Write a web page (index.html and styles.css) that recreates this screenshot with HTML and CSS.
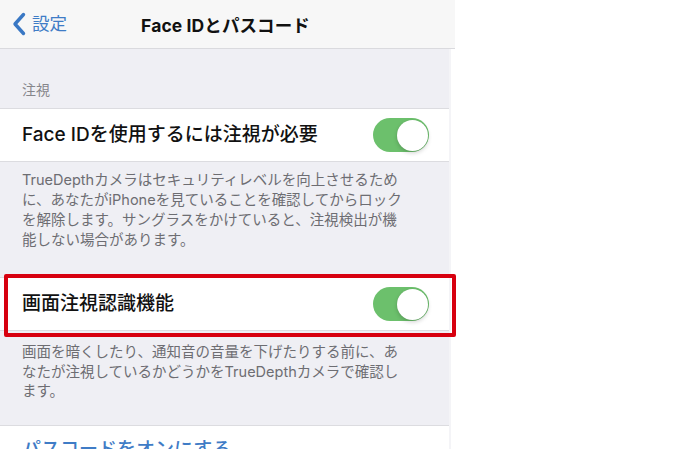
FILE: index.html
```html
<!DOCTYPE html>
<html lang="ja">
<head>
<meta charset="utf-8">
<title>Face IDとパスコード</title>
<link rel="stylesheet" href="styles.css">
</head>
<body>
<div class="phone">
  <header class="nav">
    <div class="back">
      <svg class="chevron" width="14" height="24" viewBox="0 0 14 24"><path d="M11.5 2.5 L3 12 L11.5 21.5" fill="none" stroke="#3a78c4" stroke-width="3.4" stroke-linecap="round" stroke-linejoin="round"/></svg>
      <span class="back-label">設定</span>
    </div>
    <div class="title">Face IDとパスコード</div>
    <div class="spacer"></div>
  </header>

  <div class="section-header">注視</div>

  <div class="row">
    <span class="row-label">Face IDを使用するには注視が必要</span>
    <span class="toggle"><span class="knob"></span></span>
  </div>

  <p class="footer footer-first">TrueDepthカメラはセキュリティレベルを向上させるため<br>に、あなたがiPhoneを見ていることを確認してからロック<br>を解除します。サングラスをかけていると、注視検出が機<br>能しない場合があります。</p>

  <div class="row highlight">
    <span class="row-label">画面注視認識機能</span>
    <span class="toggle"><span class="knob"></span></span>
  </div>

  <p class="footer footer-second">画面を暗くしたり、通知音の音量を下げたりする前に、あ<br>なたが注視しているかどうかをTrueDepthカメラで確認し<br>ます。</p>

  <div class="row link-row">
    <span class="row-label link">パスコードをオンにする</span>
  </div>
</div>
</body>
</html>
```

FILE: styles.css
```css
* { box-sizing: border-box; }

html, body {
  margin: 0;
  padding: 0;
  background: #ffffff;
}

body {
  font-family: Inter, "Noto Sans CJK JP", sans-serif;
  overflow: hidden;
  height: 449px;
}

.phone {
  width: 451px;
  background: #efeff4;
  height: 449px;
  overflow: visible;
  border-right: 2px solid #f4f4f7;
}

.nav {
  height: 49px;
  background: #f7f7f7;
  border-bottom: 1px solid #dadade;
  display: grid;
  grid-template-columns: 1fr auto 1fr;
  align-items: center;
  width: 455px;
  margin-right: -6px;
  padding-right: 4px;
}

.back {
  display: flex;
  align-items: center;
  padding-left: 12px;
  gap: 6px;
  color: #3a78c4;
}

.chevron { display: block; }

.back-label {
  font-size: 17.5px;
  line-height: 22px;
  color: #3f7cc6;
}

.title {
  font-size: 17.5px;
  font-weight: 700;
  color: #111;
  letter-spacing: 0.1px;
}

.section-header {
  height: 59px;
  display: flex;
  align-items: flex-end;
  padding: 0 0 9px 22px;
  font-size: 14px;
  line-height: 18px;
  color: #86868b;
}

.row {
  position: relative;
  height: 54px;
  background: #ffffff;
  border-top: 1px solid #dcdce0;
  border-bottom: 1px solid #dcdce0;
  display: flex;
  align-items: center;
  justify-content: space-between;
  padding: 0 20px 0 22px;
}

.row-label {
  font-size: 19px;
  font-weight: 500;
  color: #111;
  line-height: 24px;
}

.toggle {
  position: relative;
  width: 56px;
  height: 34px;
  border-radius: 17px;
  background: #6cc06c;
  display: flex;
  align-items: center;
  justify-content: flex-end;
  padding-right: 1.5px;
}

.knob {
  width: 31px;
  height: 31px;
  border-radius: 50%;
  background: #ffffff;
  box-shadow: 0 2px 4px rgba(0,0,0,0.18), 0 0 1px rgba(0,0,0,0.12);
}

.footer {
  margin: 0;
  padding-left: 22px;
  font-size: 14.5px;
  line-height: 20px;
  color: #6d6d72;
  white-space: nowrap;
}

.footer-first {
  padding-top: 8px;
  padding-bottom: 27px;
}

.footer-second {
  padding-top: 11px;
  padding-bottom: 24px;
  line-height: 19.5px;
}

.highlight::after {
  content: "";
  position: absolute;
  left: 4px;
  right: -7px;
  top: -4px;
  bottom: -7px;
  border: 4px solid #d7000f;
  border-radius: 2px;
  pointer-events: none;
}

.link-row {
  border-bottom: none;
  align-items: flex-start;
  padding-top: 12px;
}

.link {
  color: #3f7cc6;
  font-weight: 500;
}
```
